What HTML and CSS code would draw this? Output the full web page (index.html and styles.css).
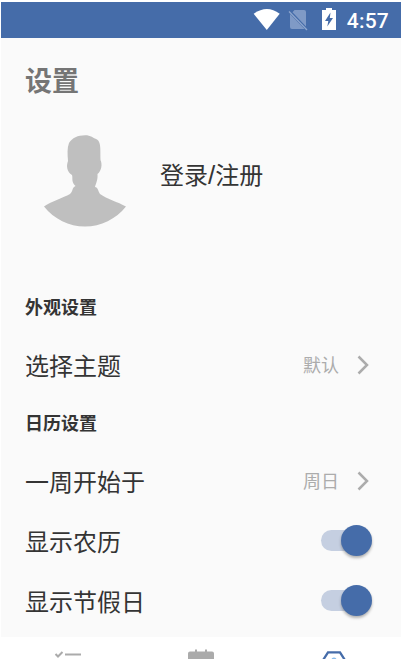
FILE: index.html
```html
<!DOCTYPE html>
<html lang="zh-CN">
<head>
<meta charset="utf-8">
<title>设置</title>
<link rel="stylesheet" href="styles.css">
</head>
<body>
<div class="phone">
  <header class="status">
    <svg class="wifi" width="28" height="22" viewBox="0 0 28 22"><path d="M.7 4.800Q14-4.800 26.700 4.800L13.800 21Z" fill="#fff"/></svg>
    <svg class="sim" width="20" height="22" viewBox="0 0 20 22"><path d="M6.500 1H16Q18 1 18 3V17.500L4.500 3.200ZM2 5L16.500 20H4Q2 20 2 18Z" fill="#7f9ac6"/><path d="M1 2.500L19 21" stroke="#8ea6cd" stroke-width="1.300"/></svg>
    <svg class="battery" width="14" height="22" viewBox="0 0 14 22"><path fill-rule="evenodd" d="M4 0H10V2H14V22H0V2H4ZM8.500 4.500L3 13H6.300L5.300 18.500L11 10H7.800Z" fill="#fff"/></svg>
    <span class="time">4:57</span>
  </header>
  <main class="content">
    <h1 class="title">设置</h1>
    <section class="profile">
      <svg class="avatar" width="84" height="93" viewBox="0 0 84 93"><path d="M42 1.300C48 1.300 50 4 54 5.500C58.500 8 57 18 57.500 26C59.500 30 58.500 37 54.500 40C55 46 53 49 52 53C55 53 55 57 57 60C64 65 75 68 83 72.500C73 85 58 92.500 42 92.500C26 92.500 11 85 1 72.500C9 67 20 64 27 60C30 57 29 55 31 53L32.500 52C28 48 30 44 29 41C24 38 23 32 25 27C24.500 20 24 14 26 9C29 4 35 1.300 42 1.300Z" fill="#bfbfbf"/></svg>
      <span class="login">登录<span class="slash">/</span>注册</span>
    </section>
    <h2 class="section">外观设置</h2>
    <div class="row"><span class="label">选择主题</span><span class="value">默认<svg class="chevron" width="12" height="20" viewBox="0 0 12 20"><path d="M1.500 1.500L10 10L1.500 18.500" fill="none" stroke="#acacac" stroke-width="2.500"/></svg></span></div>
    <h2 class="section">日历设置</h2>
    <div class="row"><span class="label">一周开始于</span><span class="value">周日<svg class="chevron" width="12" height="20" viewBox="0 0 12 20"><path d="M1.500 1.500L10 10L1.500 18.500" fill="none" stroke="#acacac" stroke-width="2.500"/></svg></span></div>
    <div class="row"><span class="label">显示农历</span><span class="switch"><i class="thumb"></i></span></div>
    <div class="row"><span class="label">显示节假日</span><span class="switch"><i class="thumb"></i></span></div>
  </main>
  <nav class="tabs">
    <svg width="28" height="22" viewBox="0 0 28 22"><path d="M1.500 6L4 8.500L8.500 4" fill="none" stroke="#ababab" stroke-width="2"/><path d="M11 6.500H27" stroke="#ababab" stroke-width="2"/></svg>
    <svg width="26" height="22" viewBox="0 0 26 22"><path d="M2 3.500H7V1.500H9V3.500H17V1.500H19V3.500H24Q26 3.500 26 5.500V22H0V5.500Q0 3.500 2 3.500Z" fill="#ababab"/></svg>
    <svg width="28" height="22" viewBox="0 0 28 22"><path d="M2.500 13L8 4.300H20L25.500 13" fill="none" stroke="#456ca9" stroke-width="2.300"/><path d="M12 11Q14 9.500 16 11" fill="none" stroke="#8dbdeb" stroke-width="1.300"/></svg>
  </nav>
</div>
</body>
</html>
```
FILE: styles.css
```css
* { box-sizing: border-box; }
html, body { height: 100%; }
body {
  margin: 0;
  overflow: hidden;
  background: #fff;
  color: #343434;
  font-family: Roboto, "Noto Sans CJK SC", sans-serif;
}
.phone {
  width: 400px;
  height: 657px;
  margin: 2px 0 0 1px;
  display: flex;
  flex-direction: column;
  overflow: hidden;
}
.status {
  height: 36px;
  flex: none;
  display: flex;
  align-items: center;
  justify-content: flex-end;
  padding-right: 12px;
  background: #456ca9;
  color: #fff;
}
.wifi { margin-right: 7px; }
.sim { margin-right: 14px; }
.battery { margin: 0 11px 2px 0; }
.time {
  font-size: 21px;
  font-weight: 500;
  line-height: 34px;
  padding-top: 2px;
  letter-spacing: 0.2px;
}
.content {
  height: 599px;
  flex: none;
  background: #fafafa;
  padding: 24px 29px 0 24px;
}
.title {
  margin: 0;
  height: 40px;
  font-size: 27px;
  line-height: 40px;
  color: #757575;
}
.profile {
  height: 178px;
  display: flex;
  padding: 32px 0 0 18px;
}
.login {
  margin-left: 33px;
  font-size: 24px;
  line-height: 84px;
}
.slash {
  font-family: "Liberation Sans", sans-serif;
  font-size: 26px;
  line-height: 1;
}
.section {
  margin: 0;
  height: 56px;
  font-size: 18px;
  line-height: 56px;
  font-weight: 700;
}
.row {
  height: 60px;
  display: flex;
  align-items: center;
  justify-content: space-between;
}
.label {
  padding-top: 2px;
  font-size: 24px;
  line-height: 58px;
}
.value {
  display: flex;
  align-items: center;
  margin-right: 1px;
  font-size: 18px;
  line-height: 60px;
  color: #acacac;
}
.chevron { margin: 0 2px 2px 18px; }
.switch {
  width: 51px;
  height: 31px;
  margin: 0 0 3px;
  display: flex;
  align-items: center;
  justify-content: flex-end;
}
.switch::before {
  content: "";
  width: 36px;
  height: 21px;
  margin-right: -16px;
  border-radius: 11px 0 0 11px;
  background: #c5cfe1;
}
.thumb {
  position: relative;
  width: 31px;
  height: 31px;
  flex: none;
  border-radius: 50%;
  background: #456ca9;
  box-shadow: 0 2px 3px rgba(0, 0, 0, 0.3);
}
.tabs {
  height: 70px;
  flex: none;
  display: grid;
  grid-template-columns: repeat(3, 1fr);
  justify-items: center;
  align-items: start;
  padding-top: 11px;
  background: #fff;
}
```
